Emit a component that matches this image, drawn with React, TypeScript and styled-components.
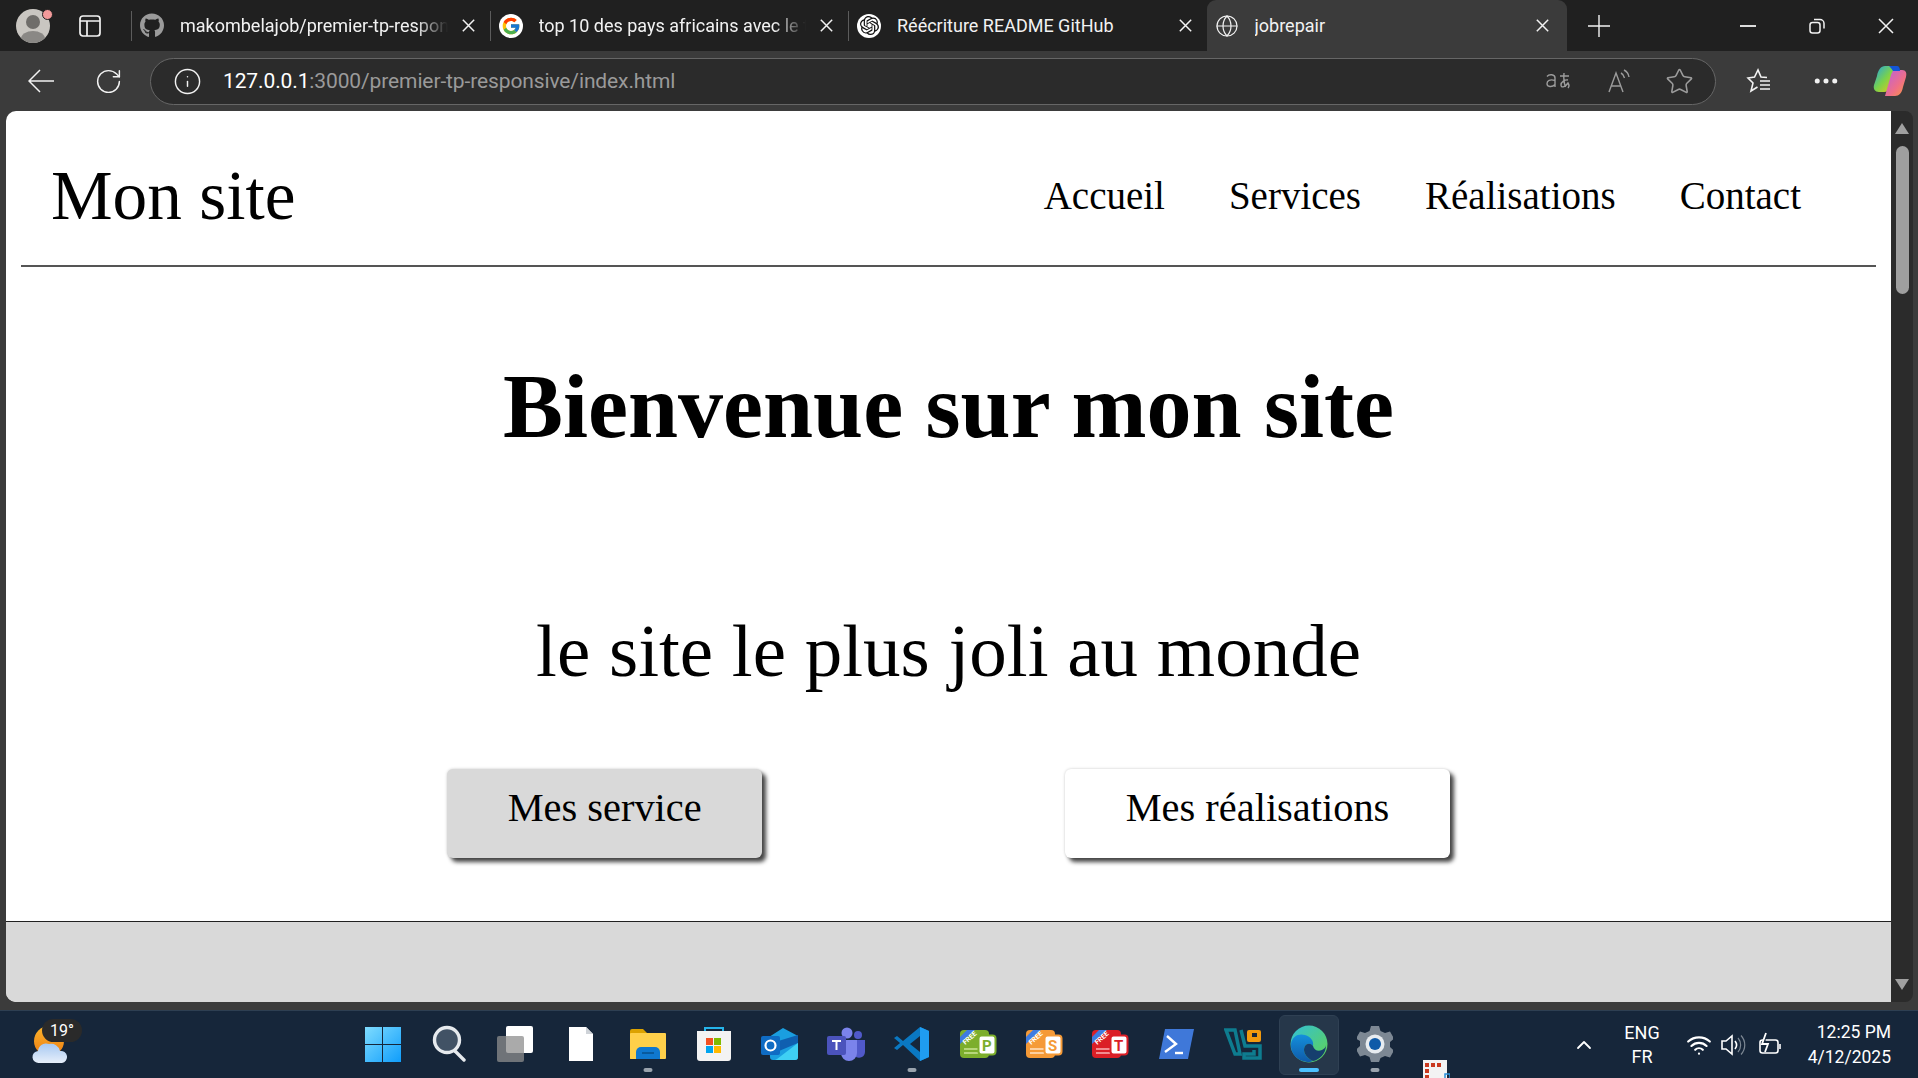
import React from "react";
import styled, { createGlobalStyle } from "styled-components";
import { FaGithub } from "react-icons/fa";
import { FcGoogle } from "react-icons/fc";
import { SiOpenai } from "react-icons/si";
import { Ellipsis, Globe, Info, RotateCw, Star, ChevronUp, Wifi } from "lucide-react";

const GlobalStyle = createGlobalStyle`
  html, body {
    margin: 0;
    padding: 0;
    overflow: hidden;
    background: #16263a;
  }
`;

const Screen = styled.div`
  width: 1918px;
  height: 1078px;
  display: flex;
  flex-direction: column;
  overflow: hidden;
  font-family: Roboto, "Noto Sans", sans-serif;
`;

/* ---- browser chrome ---- */
const TabStrip = styled.div`
  height: 51px;
  flex: none;
  display: flex;
  background: #202020;
  color: #f2f2f2;
  font-size: 18px;
`;

const ProfileArea = styled.div`
  width: 131px;
  flex: none;
  display: flex;
  align-items: center;
  padding-left: 16px;
  box-sizing: border-box;
  gap: 28px;
`;

const Avatar = styled.div`
  position: relative;
  width: 34px;
  height: 34px;
  border-radius: 50%;
  background: #c9c6c1;
  overflow: hidden;
  flex: none;
`;

const AvatarWrap = styled.div`
  position: relative;
  flex: none;
`;

const AvatarDot = styled.div`
  position: absolute;
  top: 0;
  right: -3px;
  width: 9px;
  height: 9px;
  border-radius: 50%;
  background: #f29a9a;
  border: 1px solid #202020;
`;

const Tab = styled.div<{ $active?: boolean }>`
  width: ${(p) => (p.$active ? 360 : 358.5)}px;
  flex: none;
  box-sizing: border-box;
  display: flex;
  align-items: center;
  position: relative;
  padding: 0 ${(p) => (p.$active ? 18 : 15)}px 0 ${(p) => (p.$active ? 8 : 9)}px;
  height: 51px;
  ${(p) =>
    p.$active
      ? `background: #3b3b3b; border-radius: 9px 9px 0 0;`
      : `&::before {
           content: "";
           position: absolute;
           left: 0;
           top: 11px;
           bottom: 10px;
           width: 1px;
           background: #5c5c5c;
         }`}
`;

const Favicon = styled.div<{ $white?: boolean }>`
  width: 24px;
  height: 24px;
  flex: none;
  display: flex;
  align-items: center;
  justify-content: center;
  border-radius: 50%;
  color: #111;
  background: ${(p) => (p.$white ? "#fff" : "transparent")};
`;

const TabTitle = styled.span<{ $fade?: boolean }>`
  flex: 1;
  margin: 0 14px 0 16px;
  white-space: nowrap;
  overflow: hidden;
  ${(p) =>
    p.$fade &&
    `-webkit-mask-image: linear-gradient(90deg, #000 88%, transparent 100%);
     mask-image: linear-gradient(90deg, #000 88%, transparent 100%);`}
`;

const NewTab = styled.div`
  width: 64px;
  display: flex;
  align-items: center;
  justify-content: center;
  flex: none;
`;

const WindowControls = styled.div`
  margin-left: auto;
  margin-right: -2px;
  display: flex;
  align-items: center;
`;

const WindowButton = styled.div`
  width: 69px;
  height: 51px;
  display: flex;
  align-items: center;
  justify-content: center;
`;

const Toolbar = styled.div`
  height: 60px;
  flex: none;
  display: flex;
  align-items: center;
  background: #3b3b3b;
  color: #f2f2f2;
  box-sizing: border-box;
  padding: 0 0 0 7px;
`;

const ToolButton = styled.div<{ $w?: number }>`
  width: ${(p) => p.$w ?? 68}px;
  height: 44px;
  flex: none;
  display: flex;
  align-items: center;
  justify-content: center;
`;

const AddressBar = styled.div`
  width: 1566px;
  height: 47px;
  margin: 0 9px;
  box-sizing: border-box;
  border: 1.5px solid #666;
  border-radius: 24px;
  background: #2b2b2b;
  display: flex;
  align-items: center;
  padding: 0 6px 0 22px;
  flex: none;
`;

const Url = styled.div`
  margin-left: 21px;
  font-size: 21px;
  color: #9a9a9a;
  flex: 1;
  letter-spacing: -0.12px;

  b {
    font-weight: 400;
    color: #fff;
  }
`;

const AddressIcon = styled.div`
  width: 60px;
  display: flex;
  align-items: center;
  justify-content: center;
  color: #9c9c9c;
  flex: none;
`;

/* ---- the page in the browser ---- */
const Content = styled.div`
  height: 899px;
  flex: none;
  display: flex;
  background: #3b3b3b;
  padding: 0 5px 8px 6px;
  box-sizing: border-box;
`;

const Page = styled.div`
  width: 1885px;
  flex: none;
  background: #fff;
  border-radius: 10px 0 0 10px;
  overflow: hidden;
  display: flex;
  flex-direction: column;
  font-family: "Liberation Serif", "Times New Roman", serif;
  color: #000;
`;

const Scrollbar = styled.div`
  width: 22px;
  flex: none;
  background: #2b2b2b;
  border-radius: 0 8px 8px 0;
  display: flex;
  flex-direction: column;
  align-items: center;
  padding: 12px 0 12px;
  box-sizing: border-box;
`;

const ScrollArrow = styled.div<{ $down?: boolean }>`
  width: 0;
  height: 0;
  border-left: 7px solid transparent;
  border-right: 7px solid transparent;
  ${(p) => (p.$down ? "border-top" : "border-bottom")}: 11px solid #a0a0a0;
  ${(p) => p.$down && "margin-top: auto;"}
`;

const ScrollThumb = styled.div`
  width: 13px;
  height: 148px;
  margin-top: 12px;
  border-radius: 7px;
  background: #9f9f9f;
`;

const SiteHeader = styled.header`
  height: 156px;
  margin: 0 15px;
  flex: none;
  box-sizing: border-box;
  border-bottom: 2px solid #555;
  display: flex;
  align-items: center;
  justify-content: space-between;
  padding: 15px 75px 0 30px;
`;

const Logo = styled.div`
  font-size: 69.3px;
`;

const Nav = styled.nav`
  display: flex;
  gap: 64px;
  font-size: 39px;
`;

const Hero = styled.main`
  flex: 1;
  display: flex;
  flex-direction: column;
  align-items: center;
`;

const Title = styled.h1`
  margin: 88px 0 0;
  font-size: 90px;
  line-height: 103px;
  font-weight: 700;
`;

const Subtitle = styled.p`
  margin: 150px 0 0;
  font-size: 75px;
  line-height: 86px;
`;

const Actions = styled.div`
  display: flex;
  gap: 303px;
  margin-top: 75px;
`;

const ActionButton = styled.div<{ $grey?: boolean }>`
  height: 89px;
  padding: 16px 60.5px 0;
  box-sizing: border-box;
  font-size: 40.4px;
  line-height: 46px;
  border-radius: 6px;
  background: ${(p) => (p.$grey ? "#d9d9d9" : "#fff")};
  box-shadow: 4px 4px 4px #444, 0 0 3px #ccc;
`;

const SiteFooter = styled.footer`
  height: 81px;
  flex: none;
  box-sizing: border-box;
  border-top: 1.5px solid #222;
  background: #d9d9d9;
`;

/* ---- windows taskbar ---- */
const Taskbar = styled.div`
  height: 68px;
  flex: none;
  box-sizing: border-box;
  border-top: 1px solid #2e3f52;
  background: #16263a;
  color: #fff;
  display: flex;
  align-items: center;
  position: relative;
`;

const Weather = styled.div`
  width: 350px;
  flex: none;
  padding-left: 32px;
  box-sizing: border-box;
  position: relative;
  height: 100%;
  display: flex;
  align-items: center;
`;

const WeatherBadge = styled.div`
  position: absolute;
  left: 42px;
  top: 8px;
  background: #2a2a2a;
  color: #fff;
  border-radius: 12px;
  font-size: 16px;
  line-height: 23px;
  padding: 0 8px;
`;

const TaskApp = styled.div<{ $current?: boolean; $running?: boolean }>`
  width: 66.13px;
  height: 60px;
  padding-bottom: 2px;
  box-sizing: border-box;
  flex: none;
  display: flex;
  align-items: center;
  justify-content: center;
  position: relative;
  ${(p) =>
    p.$running &&
    `&::after {
       content: "";
       position: absolute;
       bottom: 3px;
       left: 50%;
       transform: translateX(-50%);
       width: ${p.$current ? 20 : 9}px;
       height: 4px;
       border-radius: 2px;
       background: ${p.$current ? "#4cc2ff" : "#9aa3ad"};
     }`}
  ${(p) =>
    p.$current &&
    `&::before {
       content: "";
       position: absolute;
       inset: 0 3px;
       border-radius: 6px;
       background: #26374a;
       border: 1px solid #2f4053;
     }
     svg { position: relative; }`}
`;

const StrayIcon = styled.div`
  position: absolute;
  left: 1423px;
  top: 49px;
  width: 27px;
  height: 19px;
`;

const Tray = styled.div`
  margin-left: auto;
  display: flex;
  align-items: center;
  height: 100%;
  padding-right: 27px;
`;

const TrayIcon = styled.div<{ $w: number }>`
  width: ${(p) => p.$w}px;
  display: flex;
  justify-content: center;
  flex: none;
`;

const Lang = styled.div`
  width: 76px;
  text-align: center;
  font-size: 18px;
  line-height: 24px;
  flex: none;
`;

const Clock = styled.div`
  margin-left: 7px;
  text-align: right;
  font-size: 17.5px;
  line-height: 25px;
  flex: none;
  width: 92px;
`;

/* ---- drawn icons ---- */
const Sidebar = () => (
  <svg width="24" height="24" viewBox="0 0 24 24" fill="none" stroke="#f2f2f2" strokeWidth="1.7">
    <rect x="2" y="2" width="20" height="20" rx="3" />
    <path d="M2 7h20M9 7v15" />
  </svg>
);

const CloseGlyph = ({ size }: { size: number }) => (
  <svg width={size} height={size} viewBox="0 0 16 16" fill="none" stroke="#f2f2f2" strokeWidth={16 / size * 1.5} style={{ flex: "none" }}>
    <path d="M1 1l14 14M15 1 1 15" />
  </svg>
);

const PlusGlyph = () => (
  <svg width="22" height="22" viewBox="0 0 22 22" stroke="#f2f2f2" strokeWidth="1.4"><path d="M0 11h22M11 0v22" /></svg>
);

const BackGlyph = () => (
  <svg width="26" height="24" viewBox="0 0 26 24" fill="none" stroke="#f2f2f2" strokeWidth="1.5">
    <path d="M26 12H1M12 1 1 12l11 11" />
  </svg>
);

const Minimize = () => <svg width="16" height="16"><path d="M0 8h16" stroke="#f2f2f2" strokeWidth="1.8" /></svg>;

const Restore = () => (
  <svg width="16" height="16" viewBox="0 0 16 16" fill="none" stroke="#f2f2f2" strokeWidth="1.5">
    <rect x="1" y="4.500" width="10" height="10.500" rx="2.500" />
    <path d="M5 1.500h6a4 4 0 0 1 4 4v5" />
  </svg>
);

const Translate = () => (
  <svg width="28" height="22" viewBox="0 0 28 22" fill="none" stroke="#9c9c9c" strokeWidth="1.4">
    <path d="M2 6.500c2-2.500 8-2.500 8 1.500v9M10 10.500c-5-1.500-8 0-8 3.200s5 4 8 .8" />
    <path d="M15 6h9M19 3c-.5 5 0 10 1.500 14M23 10c-3-.5-7 2-7 5s4 2.500 7-2c1 1.500 2 3 0 5" />
  </svg>
);

const ReadAloud = () => (
  <svg width="26" height="26" viewBox="0 0 26 26" fill="none" stroke="#9c9c9c" strokeWidth="1.4">
    <path d="M3 24 10 5l7 19M5.500 18h9" />
    <path d="M15 5c2 1 3 3 3.500 5M18 2c3 1.500 4.500 4 5 7" />
  </svg>
);

const Favorites = () => (
  <svg width="26" height="26" viewBox="0 0 26 26" fill="none" stroke="#f2f2f2" strokeWidth="1.6">
    <path d="M21 9.500l-6-.5-3-7-3.500 7L2 10l5 5-2 8 6.500-4" />
    <path d="M14 13h10M14 17h10M14 21h10" />
  </svg>
);

const Copilot = () => (
  <svg width="34" height="34" viewBox="0 0 34 34">
    <defs>
      <linearGradient id="cpA" x1="0" y1="0" x2="1" y2="1">
        <stop offset="0" stopColor="#1fa3e8" />
        <stop offset=".5" stopColor="#7bd24a" />
        <stop offset="1" stopColor="#f7c315" />
      </linearGradient>
      <linearGradient id="cpB" x1="0" y1="0" x2="1" y2="1">
        <stop offset="0" stopColor="#b75fe0" />
        <stop offset=".6" stopColor="#ef6f88" />
        <stop offset="1" stopColor="#fb9a3c" />
      </linearGradient>
    </defs>
    <path d="M12 2h11l-6 20c-1 4-3 6-6 6H6C2 28 0 25 1 21l3-9c1-6 4-10 8-10z" fill="url(#cpA)" />
    <path d="M22 6h7c4 0 5 3 4 7l-3 10c-1 6-4 9-8 9H12l6-21c1-3 2-5 4-5z" fill="url(#cpB)" />
    <path d="M16 2h8c2 0 3 2 3 5h-7c-2-3-3-4-4-5z" fill="#1356d8" />
  </svg>
);

const Person = () => (
  <svg width="34" height="34" viewBox="0 0 34 34">
    <circle cx="17" cy="13" r="7" fill="#6f6d6a" />
    <ellipse cx="17" cy="30" rx="12" ry="8" fill="#8a8885" />
  </svg>
);

const WeatherIcon = () => (
  <svg width="36" height="40" viewBox="0 0 36 40">
    <defs>
      <linearGradient id="sun" x1="0" y1="0" x2="0" y2="1">
        <stop offset="0" stopColor="#fbb42c" />
        <stop offset="1" stopColor="#ee7d12" />
      </linearGradient>
      <linearGradient id="cloud" x1="0" y1="0" x2="0" y2="1">
        <stop offset="0" stopColor="#a6c8f2" />
        <stop offset="1" stopColor="#e7effa" />
      </linearGradient>
    </defs>
    <circle cx="17" cy="16" r="15" fill="url(#sun)" />
    <path d="M7 38a6 6 0 0 1-1-12 8 8 0 0 1 11-7 9 9 0 0 1 11 7 6 6 0 0 1 2 12z" fill="url(#cloud)" />
  </svg>
);

const WindowsLogo = () => (
  <svg width="36" height="36" viewBox="0 0 36 36">
    <defs>
      <linearGradient id="win" x1="0" y1="0" x2="1" y2="1">
        <stop offset="0" stopColor="#7fdcff" />
        <stop offset="1" stopColor="#0f9dfb" />
      </linearGradient>
    </defs>
    <path d="M0 1h17v17H0zM18 1h18v17H18zM0 19h17v17H0zM18 19h18v17H18z" fill="url(#win)" />
  </svg>
);

const SearchIcon = () => (
  <svg width="34" height="38" viewBox="0 0 34 38" fill="#415265" stroke="#e6eaee" strokeWidth="3.4" strokeLinecap="round">
    <circle cx="15" cy="15" r="12.500" />
    <path d="M23 26l9 9" fill="none" />
  </svg>
);

const TaskView = () => (
  <svg width="36" height="36" viewBox="0 0 36 36">
    <rect x="9" y="0" width="27" height="27" rx="2" fill="#fff" />
    <rect x="0" y="10" width="27" height="26" rx="2" fill="#8d8d8d" fillOpacity=".75" />
  </svg>
);

const PageIcon = () => (
  <svg width="26" height="36" viewBox="0 0 26 36">
    <path d="M1 1h17l7 7v27H1z" fill="#fff" />
    <path d="M18 1v7h7z" fill="#cfd3d8" />
  </svg>
);

const Explorer = () => (
  <svg width="38" height="34" viewBox="0 0 38 34">
    <path d="M1 4a2 2 0 0 1 2-2h11l4 4h18v26H1z" fill="#dca200" />
    <rect x="1" y="6" width="36" height="26" rx="1" fill="#ffd04a" />
    <path d="M7 32v-7a5 5 0 0 1 5-5h14a5 5 0 0 1 5 5v7z" fill="#0f78cf" />
    <path d="M13 26h12" stroke="#07508e" strokeWidth="1.500" />
  </svg>
);

const Store = () => (
  <svg width="36" height="36" viewBox="0 0 36 36">
    <path d="M9 6V2h18v4" fill="none" stroke="#25b4ea" strokeWidth="2" />
    <path d="M1 5h34v27a3 3 0 0 1-3 3H4a3 3 0 0 1-3-3z" fill="#f3f3f3" />
    <rect x="10" y="12" width="7" height="7" fill="#f25022" />
    <rect x="18" y="12" width="7" height="7" fill="#7fba00" />
    <rect x="10" y="20" width="7" height="7" fill="#00a4ef" />
    <rect x="18" y="20" width="7" height="7" fill="#ffb900" />
  </svg>
);

const Outlook = () => (
  <svg width="38" height="34" viewBox="0 0 38 34">
    <path d="M8 10 22 1l15 8v21a3 3 0 0 1-3 3H12a3 3 0 0 1-3-3z" fill="#1a9ee0" />
    <path d="M14 15 37 8v8L18 24z" fill="#0f5fb0" />
    <path d="M16 32 37 16v14a3 3 0 0 1-3 3H14z" fill="#3fd0f4" />
    <rect x="0" y="9" width="19" height="19" rx="2" fill="#0f6cc4" />
    <circle cx="9.500" cy="18.500" r="5" fill="none" stroke="#fff" strokeWidth="2.200" />
  </svg>
);

const Teams = () => (
  <svg width="38" height="34" viewBox="0 0 38 34">
    <circle cx="20" cy="6" r="5.500" fill="#7b83eb" />
    <circle cx="31" cy="8" r="4" fill="#5059c9" />
    <path d="M25 13h13v12a6 6 0 0 1-9 5z" fill="#5059c9" />
    <path d="M11 13h19v13a8 8 0 0 1-16 0z" fill="#7b83eb" />
    <rect x="0" y="9" width="19" height="19" rx="2" fill="#4b53bc" />
    <path d="M5 14h9M9.500 14v9" stroke="#fff" strokeWidth="2" />
  </svg>
);

const VsCode = () => (
  <svg width="36" height="36" viewBox="0 0 36 36">
    <path d="M26 1l9 4v26l-9 4L9 19 3 24l-3-2 6-5-6-5 3-2 6 5z" fill="#0a78c2" />
    <path d="M26 1l9 4v26l-9 4z" fill="#1f9cf0" />
    <path d="M26 10v16l-10-8z" fill="#16263a" />
  </svg>
);

const FreeBadge = ({ color, light, letter }: { color: string; light: string; letter: string }) => (
  <svg width="37" height="30" viewBox="0 0 37 30">
    <rect x="0" y="1" width="29" height="28" rx="4" fill={color} />
    <path d="M4 20h17M4 24h17" stroke={light} strokeWidth="2" />
    <path d="M0 15 15 1H7L0 8z" fill="#3f7be0" />
    <text x="1" y="13" fontFamily="Roboto, sans-serif" fontSize="7" fontWeight="700" fill="#fff" transform="rotate(-42 7 9)">FREE</text>
    <rect x="18.500" y="6.500" width="17" height="19" rx="3" fill="#fff" stroke={color} strokeWidth="2" />
    <text x="22" y="22" fontFamily="Roboto, sans-serif" fontSize="15" fontWeight="700" fill={color}>{letter}</text>
  </svg>
);

const PowerShell = () => (
  <svg width="36" height="32" viewBox="0 0 36 32">
    <path d="M6 1h29l-6 30H0z" fill="#3f78d9" />
    <path d="M8 8l9 8-11 8" fill="none" stroke="#fff" strokeWidth="2.400" />
    <path d="M16 25h8" stroke="#fff" strokeWidth="2.400" />
  </svg>
);

const VisualStudioShop = () => (
  <svg width="38" height="34" viewBox="0 0 38 34" fill="none">
    <path d="M2 3h9l5 24h-5z" stroke="#0e7c8f" strokeWidth="3.500" />
    <path d="M17 3l4 16h15v12H20v-4h10v-4" stroke="#0e7c8f" strokeWidth="3.500" />
    <rect x="23" y="3" width="14" height="12" rx="2" fill="#f29a0e" />
    <rect x="28" y="6" width="5" height="4" fill="#16263a" />
  </svg>
);

const Edge = () => (
  <svg width="38" height="38" viewBox="0 0 38 38">
    <defs>
      <linearGradient id="edgeA" x1="0" y1="0" x2="1" y2="1">
        <stop offset="0" stopColor="#32bfd8" />
        <stop offset="1" stopColor="#62d44f" />
      </linearGradient>
      <linearGradient id="edgeB" x1="0" y1="0" x2="0" y2="1">
        <stop offset="0" stopColor="#1490dc" />
        <stop offset="1" stopColor="#0f5aa8" />
      </linearGradient>
    </defs>
    <circle cx="19" cy="19" r="18.500" fill="url(#edgeA)" />
    <path d="M1 19C2 11 9 8 15 10c6 2 9 6 8 11-2-3-6-3-8 0-3 5 1 12 8 15-2 1-4 1.500-6 1C8 36 0 29 1 19z" fill="url(#edgeB)" />
    <path d="M23 21c1 4 5 6 9 4 2-1 4-3 4-5 0 9-7 15-13 16-7-3-11-10-8-15 2-3 6-3 8 0z" fill="#163f6e" />
  </svg>
);

const Gear = () => (
  <svg width="36" height="38" viewBox="0 0 36 38">
    <path d="M14 1h8l1.500 5 4.500 2 5-1.500 4 7-4 3.500v5l4 3.500-4 7-5-1.500-4.500 2L22 37h-8l-1.500-5-4.500-2-5 1.500-4-7 4-3.500v-5L-1 13.500l4-7 5 1.500 4.500-2z" fill="#7d8894" />
    <circle cx="18" cy="19" r="9.500" fill="#e8ecf0" />
    <circle cx="18" cy="19" r="6" fill="#0f5aa8" />
  </svg>
);

const Sound = () => (
  <svg width="26" height="26" viewBox="0 0 26 26" fill="none" stroke="#fff" strokeWidth="1.600">
    <path d="M2 9h4l6-5v18l-6-5H2z" />
    <path d="M15 9c2 2.500 2 5.500 0 8" />
    <path d="M18 6c3.500 4 3.500 10 0 14M21 3.500c5 5.500 5 13.500 0 19" stroke="#7d8894" strokeWidth="1.200" />
  </svg>
);

const Battery = () => (
  <svg width="26" height="26" viewBox="0 0 26 26" fill="none" stroke="#fff" strokeWidth="1.600">
    <rect x="3" y="8" width="18" height="13" rx="2.500" />
    <path d="M23 12v5" />
    <path d="M9 1 5 12h6l-3 8" strokeWidth="1.800" fill="#16263a" />
  </svg>
);

const tabs = [
  { icon: <FaGithub size={25} color="#9b9b9b" />, title: "makombelajob/premier-tp-responsive", fade: true },
  { icon: <FcGoogle size={20} />, title: "top 10 des pays africains avec le taux", fade: true, white: true },
  { icon: <SiOpenai size={19} />, title: "Réécriture README GitHub", white: true },
];

const apps = [
  { icon: <WindowsLogo /> },
  { icon: <SearchIcon /> },
  { icon: <TaskView /> },
  { icon: <PageIcon /> },
  { icon: <Explorer />, running: true },
  { icon: <Store /> },
  { icon: <Outlook /> },
  { icon: <Teams /> },
  { icon: <VsCode />, running: true },
  { icon: <FreeBadge color="#7cae2c" light="#b7d77a" letter="P" /> },
  { icon: <FreeBadge color="#f59a37" light="#fdd0a0" letter="S" /> },
  { icon: <FreeBadge color="#db1f26" light="#f28d90" letter="T" /> },
  { icon: <PowerShell /> },
  { icon: <VisualStudioShop /> },
  { icon: <Edge />, running: true, current: true },
  { icon: <Gear />, running: true },
];

export default function App() {
  return (
    <Screen>
      <GlobalStyle />
      <TabStrip>
        <ProfileArea>
          <AvatarWrap>
            <Avatar><Person /></Avatar>
            <AvatarDot />
          </AvatarWrap>
          <Sidebar />
        </ProfileArea>
        {tabs.map((t) => (
          <Tab key={t.title}>
            <Favicon $white={t.white}>{t.icon}</Favicon>
            <TabTitle $fade={t.fade}>{t.title}</TabTitle>
            <CloseGlyph size={13} />
          </Tab>
        ))}
        <Tab $active>
          <Favicon><Globe size={28} color="#f2f2f2" strokeWidth={1.2} /></Favicon>
          <TabTitle>jobrepair</TabTitle>
          <CloseGlyph size={13} />
        </Tab>
        <NewTab><PlusGlyph /></NewTab>
        <WindowControls>
          <WindowButton><Minimize /></WindowButton>
          <WindowButton><Restore /></WindowButton>
          <WindowButton><CloseGlyph size={16} /></WindowButton>
        </WindowControls>
      </TabStrip>

      <Toolbar>
        <ToolButton><BackGlyph /></ToolButton>
        <ToolButton $w={66}><RotateCw size={29} strokeWidth={1.2} /></ToolButton>
        <AddressBar>
          <Info size={29} strokeWidth={1.2} color="#f2f2f2" />
          <Url><b>127.0.0.1</b>:3000/premier-tp-responsive/index.html</Url>
          <AddressIcon><Translate /></AddressIcon>
          <AddressIcon><ReadAloud /></AddressIcon>
          <AddressIcon><Star size={29} strokeWidth={1.3} /></AddressIcon>
        </AddressBar>
        <ToolButton $w={68}><Favorites /></ToolButton>
        <ToolButton $w={66}><Ellipsis size={30} strokeWidth={2} /></ToolButton>
        <ToolButton $w={62}><Copilot /></ToolButton>
      </Toolbar>

      <Content>
        <Page>
          <SiteHeader>
            <Logo>Mon site</Logo>
            <Nav>
              <span>Accueil</span>
              <span>Services</span>
              <span>Réalisations</span>
              <span>Contact</span>
            </Nav>
          </SiteHeader>
          <Hero>
            <Title>Bienvenue sur mon site</Title>
            <Subtitle>le site le plus joli au monde</Subtitle>
            <Actions>
              <ActionButton $grey>Mes service</ActionButton>
              <ActionButton>Mes réalisations</ActionButton>
            </Actions>
          </Hero>
          <SiteFooter />
        </Page>
        <Scrollbar>
          <ScrollArrow />
          <ScrollThumb />
          <ScrollArrow $down />
        </Scrollbar>
      </Content>

      <Taskbar>
        <Weather>
          <WeatherIcon />
          <WeatherBadge>19°</WeatherBadge>
        </Weather>
        {apps.map((a, i) => (
          <TaskApp key={i} $running={a.running} $current={a.current}>{a.icon}</TaskApp>
        ))}
        <StrayIcon>
          <svg width="27" height="19" viewBox="0 0 27 19">
            <rect x="0" y="0" width="24" height="19" fill="#f3f3f3" />
            <path d="M2 3h4v4H2zM8 3h4v4H8zM14 3h4v4h-4zM2 9h4v4H2zM2 15h4v4H2z" fill="#c9391f" />
            <rect x="22" y="14" width="5" height="5" fill="none" stroke="#2a8fd8" strokeWidth="1.500" />
          </svg>
        </StrayIcon>
        <Tray>
          <TrayIcon $w={40}><ChevronUp size={24} strokeWidth={1.8} /></TrayIcon>
          <Lang>ENG<br />FR</Lang>
          <TrayIcon $w={38}><Wifi size={26} strokeWidth={2} /></TrayIcon>
          <TrayIcon $w={30}><Sound /></TrayIcon>
          <TrayIcon $w={44}><Battery /></TrayIcon>
          <Clock>12:25 PM<br />4/12/2025</Clock>
        </Tray>
      </Taskbar>
    </Screen>
  );
}
